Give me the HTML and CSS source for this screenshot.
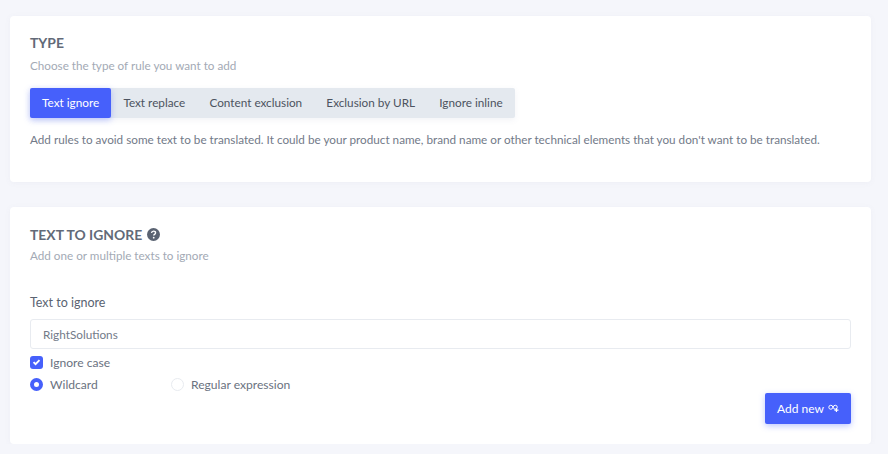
FILE: index.html
```html
<!DOCTYPE html>
<html lang="en">
<head>
    <meta charset="UTF-8">
    <meta name="viewport" content="width=device-width, initial-scale=1.0">
    <title>Add rule</title>
    <link rel="stylesheet" href="styles.css">
</head>
<body>
    <div class="container">
        <section class="card card-type">
            <h2 class="card-title">TYPE</h2>
            <p class="card-sub">Choose the type of rule you want to add</p>
            <div class="tabs">
                <a class="tab active">Text ignore</a>
                <a class="tab">Text replace</a>
                <a class="tab">Content exclusion</a>
                <a class="tab">Exclusion by URL</a>
                <a class="tab">Ignore inline</a>
            </div>
            <p class="tab-help">Add rules to avoid some text to be translated. It could be your product name, brand name or other technical elements that you don't want to be translated.</p>
        </section>
        <section class="card card-form">
            <h2 class="card-title">TEXT TO IGNORE
                <svg class="help-icon" viewBox="0 0 14 14" width="13" height="13">
                    <circle cx="7" cy="7" r="7" fill="#5a6372"/>
                    <path d="M4.9 5.4c.1-1.3 1-2 2.2-2 1.2 0 2.1.7 2.1 1.8 0 .8-.4 1.2-1.1 1.7-.6.4-.8.6-.8 1.2" fill="none" stroke="#fff" stroke-width="1.5"/>
                    <circle cx="7.2" cy="10.4" r=".95" fill="#fff"/>
                </svg>
            </h2>
            <p class="card-sub">Add one or multiple texts to ignore</p>
            <label class="field-label">Text to ignore</label>
            <input class="text-input" type="text" value="RightSolutions">
            <div class="option check-row">
                <span class="checkbox">
                    <svg viewBox="0 0 14 14" width="14" height="14"><path d="M3.8 7.2l2.2 2.2 4.2-4.4" fill="none" stroke="#fff" stroke-width="2"/></svg>
                </span>
                Ignore case
            </div>
            <div class="radio-row">
                <div class="option radio-item"><span class="radio checked"></span>Wildcard</div>
                <div class="option"><span class="radio"></span>Regular expression</div>
            </div>
            <div class="actions">
                <button class="btn-add">Add new
                    <svg viewBox="0 0 12 10" width="11" height="9">
                        <circle cx="3" cy="3.6" r="2.2" fill="none" stroke="#fff" stroke-width="1.1"/>
                        <circle cx="8" cy="3.6" r="2.2" fill="none" stroke="#fff" stroke-width="1.1"/>
                        <path d="M8.6 4.5h1.3v1.6h1.6v1.3H9.900v1.600H8.600V7.400H7V6.100h1.600z" fill="#fff"/>
                    </svg>
                </button>
            </div>
        </section>
    </div>
</body>
</html>
```

FILE: styles.css
```css
* {
    box-sizing: border-box;
}
body {
    margin: 0;
    background-color: #f5f6fb;
    color: #5a6372;
    font-family: Lato, Arial, sans-serif;
    font-size: 11.75px;
    overflow: hidden;
}
.container {
    width: 861px;
    margin-left: 10px;
    padding-top: 16px;
}
.card {
    background-color: #ffffff;
    border-radius: 4px;
    padding: 0 20px;
    box-shadow: 0 1px 6px rgba(90, 100, 140, 0.05);
}
.card-type {
    height: 166px;
    margin-bottom: 25px;
    padding-top: 17px;
}
.card-form {
    height: 237px;
    padding-top: 18px;
}
.card-title {
    display: flex;
    align-items: center;
    gap: 5px;
    margin: 0;
    height: 18px;
    font-size: 13.9px;
    font-weight: 700;
    color: #626a78;
}
.card-sub {
    margin: 4px 0 0;
    line-height: 17px;
    font-size: 11.7px;
    color: #a3aab5;
}
.card-type .card-sub {
    margin-top: 6px;
}
.tabs {
    display: inline-flex;
    margin-top: 14px;
    background-color: #e4e9ef;
    border-radius: 2px;
    box-shadow: 0 2px 6px rgba(90, 100, 140, 0.08);
}
.tab {
    height: 30px;
    line-height: 30px;
    padding: 0 12.1px;
    color: #4c5360;
}
.tab.active {
    background-color: #4660fb;
    color: #ffffff;
    border-radius: 2px;
    box-shadow: 0 2px 6px rgba(70, 96, 251, 0.35);
}
.tab-help {
    margin: 13px 0 0;
    line-height: 17px;
    font-size: 11.72px;
    color: #727a88;
}
.field-label {
    display: block;
    margin-top: 30px;
    line-height: 17px;
    font-size: 12.5px;
    color: #5a6372;
}
.text-input {
    display: block;
    width: 100%;
    height: 30px;
    margin-top: 8px;
    padding: 0 12px;
    border: 1px solid #e8ebf0;
    border-radius: 3px;
    font-family: inherit;
    font-size: 11.75px;
    color: #727a88;
    outline: none;
}
.option {
    display: flex;
    align-items: center;
    height: 22px;
    font-size: 12.1px;
    color: #6a7280;
}
.check-row {
    margin-top: 2px;
}
.checkbox {
    width: 13px;
    height: 13px;
    margin-right: 7px;
    border-radius: 3px;
    background-color: #4660fb;
    display: flex;
    align-items: center;
    justify-content: center;
}
.radio-row {
    display: flex;
    align-items: center;
}
.radio-item {
    width: 141px;
}
.radio {
    width: 13px;
    height: 13px;
    margin-right: 7px;
    border-radius: 50%;
    border: 1px solid #e8ebf0;
    background-color: #ffffff;
}
.radio.checked {
    border: 4px solid #4660fb;
}
.actions {
    display: flex;
    justify-content: flex-end;
    margin-top: -2px;
}
.btn-add {
    display: flex;
    align-items: center;
    gap: 4px;
    height: 31px;
    padding: 0 12px 0 12px;
    border: none;
    border-radius: 2px;
    background-color: #4660fb;
    color: #ffffff;
    font-family: inherit;
    font-size: 12px;
    box-shadow: 0 2px 6px rgba(70, 96, 251, 0.35);
}
```
